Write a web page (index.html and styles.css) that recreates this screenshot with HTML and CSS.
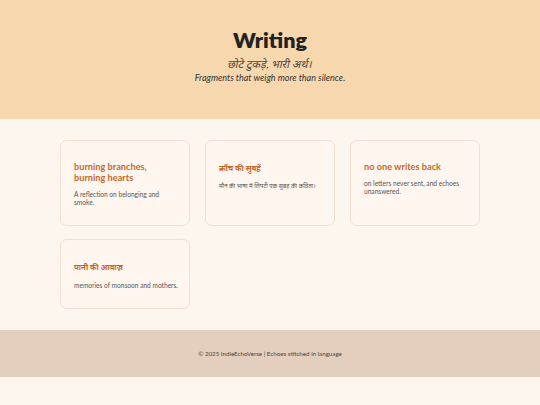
FILE: index.html
```html
<!DOCTYPE html>
<html lang="en">
<head>
<meta charset="utf-8">
<title>Writing</title>
<link rel="stylesheet" href="styles.css">
</head>
<body>
<header class="hero">
  <h1 class="hero-title">Writing</h1>
  <p class="hero-hindi" lang="hi"><span class="slant">छोटे टुकड़े, भारी अर्थ।</span></p>
  <p class="hero-sub">Fragments that weigh more than silence.</p>
</header>
<main class="grid">
  <article class="card">
    <h2 class="card-title">burning branches, burning hearts</h2>
    <p class="card-desc">A reflection on belonging and smoke.</p>
  </article>
  <article class="card">
    <h2 class="card-title card-title-hi" lang="hi">क्रौंच की सुबहें</h2>
    <p class="card-desc card-desc-hi" lang="hi">मौन की भाषा में लिपटी एक सुबह की कविता।</p>
  </article>
  <article class="card">
    <h2 class="card-title">no one writes back</h2>
    <p class="card-desc">on letters never sent, and echoes unanswered.</p>
  </article>
  <article class="card">
    <h2 class="card-title card-title-hi" lang="hi">पानी की आवाज़</h2>
    <p class="card-desc">memories of monsoon and mothers.</p>
  </article>
</main>
<footer class="footer">
  <p>© 2025 IndieEchoVerse | Echoes stitched in language</p>
</footer>
</body>
</html>
```
FILE: styles.css
```css
* { box-sizing: border-box; }
html, body { margin: 0; padding: 0; }
body {
  background: #fdf6ef;
  font-family: Lato, "Noto Sans", sans-serif;
  color: #333;
}
.hero {
  background: #f7d7ae;
  height: 119px;
  padding-top: 28px;
  text-align: center;
}
.hero-title {
  margin: 0;
  font-size: 21.5px;
  font-weight: 800;
  color: #222;
  line-height: 24px;
}
.hero-hindi {
  margin: 5px 0 0;
  font-size: 11px;
  color: #444;
  line-height: 14px;
}
.slant {
  display: inline-block;
  transform: skewX(-12deg);
}
.hero-sub {
  margin: 0;
  font-size: 9px;
  font-style: italic;
  color: #333;
  line-height: 14px;
}
.grid {
  width: 420px;
  margin: 21px auto 0;
  display: grid;
  grid-template-columns: repeat(3, 1fr);
  gap: 13px 15px;
  padding-bottom: 21px;
}
.card {
  background: #fff7ef;
  border: 1px solid #f1dfcf;
  border-radius: 7px;
  padding: 20px 9px 19px 13px;
}
.card-title {
  margin: 0 3px 0 0;
  font-size: 9.2px;
  line-height: 11px;
  font-weight: 700;
  color: #c6682d;
}
.card-title-hi {
  font-size: 7.8px;
  line-height: 14px;
}
.card-desc {
  margin: 7px 0 0;
  font-size: 6.6px;
  line-height: 8px;
  color: #555;
}
.card-desc-hi {
  font-size: 6px;
}
.footer {
  background: #e4cfbe;
  height: 47px;
  display: flex;
  align-items: center;
  justify-content: center;
}
.footer p {
  margin: 0;
  font-size: 6.2px;
  color: #444;
}
```
